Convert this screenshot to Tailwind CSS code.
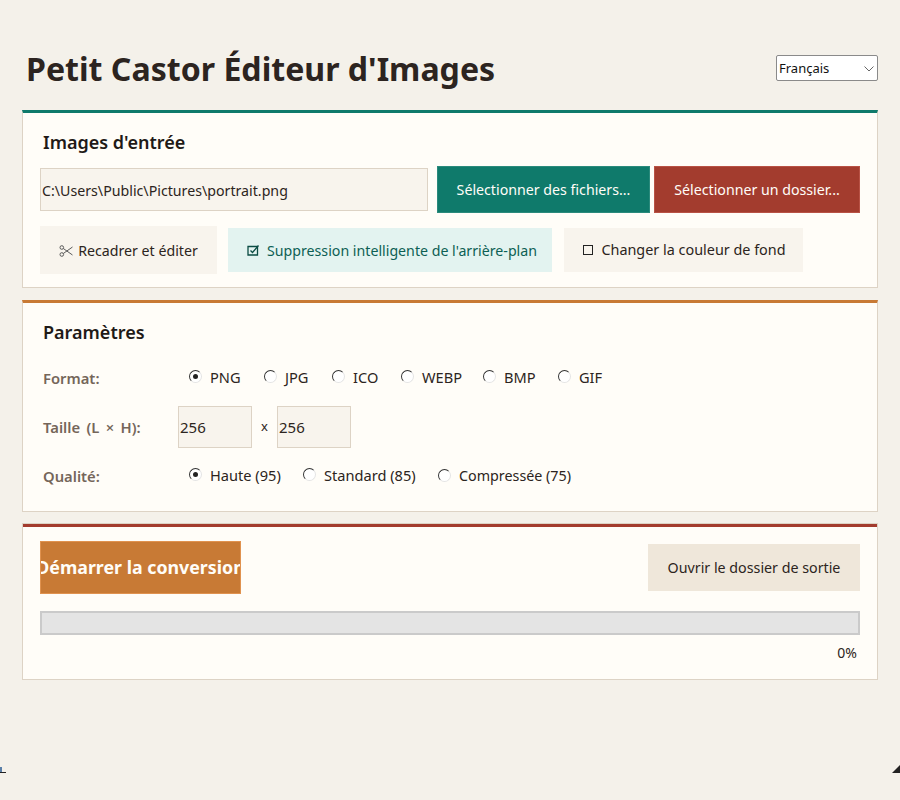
<!DOCTYPE html>
<html lang="fr">
<head>
<meta charset="utf-8">
<script src="https://cdn.jsdelivr.net/npm/@tailwindcss/browser@4"></script>
<title>Petit Castor Éditeur d'Images</title>
</head>
<body class="bg-[#f4f1ea] font-['Noto_Sans','Open_Sans',sans-serif] text-[#2c2420]">
<div class="relative h-[800px] w-[900px] overflow-hidden px-[22px] pt-[46px]">
  <header class="flex h-[64px] items-start justify-between">
    <h1 class="pl-[4px] text-[32.100px] leading-[46px] font-bold text-[#2c2420]">Petit Castor Éditeur d'Images</h1>
    <div class="relative mt-[9px] h-[26px] w-[102px]">
      <select class="block h-full w-full appearance-none rounded-[2px] border border-[#8a8a8a] bg-white pl-[2px] pt-[1px] text-[13px] text-[#111]"><option>Français</option></select>
      <svg class="absolute right-[3px] top-[10px]" width="12" height="8" viewBox="0 0 12 8" fill="none" stroke="#666"><path d="M1.500 1.500 6 6l4.500-4.500"/></svg>
    </div>
  </header>

  <section class="h-[178px] border border-t-[3px] border-[#ddd3c5] border-t-[#0f7a6b] bg-[#fffdf8] px-[17px]">
    <h2 class="pl-[3px] pt-[16px] text-[18px] leading-[27px] font-semibold text-[#1f1a17]">Images d'entrée</h2>
    <div class="mt-[10px] flex h-[47px] items-center">
      <input class="h-[43px] w-[388px] border border-[#ddd3c5] bg-[#f8f4ed] pl-[1px] pt-[1px] text-[14.200px] text-[#2c2420]" value="C:\Users\Public\Pictures\portrait.png">
      <button class="ml-[9px] h-[47px] w-[213px] border border-[#2a8a7c] bg-[#0f7a6b] text-[14.200px] text-[#fffdf8]">Sélectionner des fichiers...</button>
      <button class="ml-[4px] h-[47px] w-[206px] border border-[#b85245] bg-[#a33c2e] text-[14.200px] text-[#fffdf8]">Sélectionner un dossier...</button>
    </div>
    <div class="mt-[13px] flex h-[48px] items-center">
      <button class="flex h-[48px] w-[177px] items-center justify-center gap-[5px] bg-[#f8f4ed] pt-[2px] text-[14.200px]">
        <svg width="14" height="14" viewBox="0 0 14 14" fill="none" stroke="#5a5a5a" stroke-width="1"><circle cx="2.800" cy="3.500" r="1.800"/><circle cx="2.800" cy="10.500" r="1.800"/><path d="M4.300 4.500 13.500 11M4.300 9.500 13.500 3"/></svg>
        <span>Recadrer et éditer</span>
      </button>
      <button class="ml-[11px] flex h-[44px] w-[324px] items-center justify-center gap-[7px] bg-[#e3f3f0] pl-[4px] pt-[1px] text-[14.200px] text-[#0d5f54]">
        <svg width="13" height="13" viewBox="0 0 13 13" fill="none" stroke="#0b4c43" stroke-width="1.300"><path d="M1 2.500h9.500v8.500H1z"/><path d="m3.500 6.500 2 2 6-7"/></svg>
        <span>Suppression intelligente de l'arrière-plan</span>
      </button>
      <button class="ml-[12px] flex h-[44px] w-[239px] items-center justify-center gap-[8px] bg-[#f8f4ed] pb-[1px] pl-[2px] text-[14.400px]">
        <span class="h-[10px] w-[10px] border border-[#222]"></span>
        <span>Changer la couleur de fond</span>
      </button>
    </div>
  </section>

  <section class="mt-[12px] h-[212px] border border-t-[3px] border-[#ddd3c5] border-t-[#c87a35] bg-[#fffdf8] px-[20px]">
    <h2 class="pt-[16px] text-[18px] leading-[27px] font-semibold text-[#1f1a17]">Paramètres</h2>
    <div class="mt-[21px] flex h-[22px] items-center text-[14.600px]">
      <span class="w-[146px] text-[14.800px] font-semibold text-[#75665a]">Format:</span>
      <label class="flex w-[75px] items-center gap-[8px]"><span class="flex h-[13px] w-[13px] items-center justify-center rounded-full border border-[#e4e4e4] border-t-[#333] border-l-[#333] -translate-y-[1px] bg-white"><span class="h-[5px] w-[5px] rounded-full bg-[#222]"></span></span>PNG</label>
      <label class="flex w-[68px] items-center gap-[8px]"><span class="h-[13px] w-[13px] rounded-full border border-[#e4e4e4] border-t-[#333] border-l-[#333] -translate-y-[1px] bg-white"></span>JPG</label>
      <label class="flex w-[69px] items-center gap-[8px]"><span class="h-[13px] w-[13px] rounded-full border border-[#e4e4e4] border-t-[#333] border-l-[#333] -translate-y-[1px] bg-white"></span>ICO</label>
      <label class="flex w-[82px] items-center gap-[8px]"><span class="h-[13px] w-[13px] rounded-full border border-[#e4e4e4] border-t-[#333] border-l-[#333] -translate-y-[1px] bg-white"></span>WEBP</label>
      <label class="flex w-[75px] items-center gap-[8px]"><span class="h-[13px] w-[13px] rounded-full border border-[#e4e4e4] border-t-[#333] border-l-[#333] -translate-y-[1px] bg-white"></span>BMP</label>
      <label class="flex items-center gap-[8px]"><span class="h-[13px] w-[13px] rounded-full border border-[#e4e4e4] border-t-[#333] border-l-[#333] -translate-y-[1px] bg-white"></span>GIF</label>
    </div>
    <div class="mt-[17px] flex h-[42px] items-center text-[14px]">
      <span class="w-[135px] text-[14.800px] font-semibold [word-spacing:2.500px] text-[#75665a]">Taille (L × H):</span>
      <input class="h-[42px] w-[74px] border border-[#ddd3c5] bg-[#f8f4ed] pl-[1px] text-[15px] text-[#2c2420]" value="256">
      <span class="w-[25px] text-center text-[13px]">x</span>
      <input class="h-[42px] w-[74px] border border-[#ddd3c5] bg-[#f8f4ed] pl-[1px] text-[15px] text-[#2c2420]" value="256">
    </div>
    <div class="mt-[17px] flex h-[22px] items-center text-[14.600px]">
      <span class="w-[146px] text-[14.800px] font-semibold text-[#75665a]">Qualité:</span>
      <label class="flex w-[114px] items-center gap-[8px]"><span class="flex h-[13px] w-[13px] items-center justify-center rounded-full border border-[#e4e4e4] border-t-[#333] border-l-[#333] -translate-y-[1px] bg-white"><span class="h-[5px] w-[5px] rounded-full bg-[#222]"></span></span>Haute (95)</label>
      <label class="flex w-[135px] items-center gap-[8px]"><span class="h-[13px] w-[13px] rounded-full border border-[#e4e4e4] border-t-[#333] border-l-[#333] -translate-y-[1px] bg-white"></span>Standard (85)</label>
      <label class="flex items-center gap-[8px] text-[14.300px]"><span class="h-[13px] w-[13px] rounded-full border border-[#e4e4e4] border-t-[#333] border-l-[#333] -translate-y-[1px] bg-white"></span>Compressée (75)</label>
    </div>
  </section>

  <section class="mt-[11px] h-[157px] border border-[#ddd3c5] bg-[#fffdf8] px-[17px] shadow-[inset_0_3px_0_#a33c2e]">
    <div class="pt-[17px]">
      <div class="flex h-[53px] items-center justify-between">
        <button class="flex h-[53px] w-[201px] items-center justify-center overflow-hidden border border-[#e0924f] bg-[#c87a35] text-[17.800px] font-bold whitespace-nowrap text-[#fffdf8]">Démarrer la conversion</button>
        <button class="h-[47px] w-[212px] bg-[#efe7da] text-[14.250px]">Ouvrir le dossier de sortie</button>
      </div>
    </div>
    <div class="mt-[17px] h-[24px] border-2 border-[#cacaca] bg-[#e4e4e4]"></div>
    <p class="mt-[8px] pr-[3px] text-right text-[14px] leading-[20px]">0%</p>
  </section>

  <span class="absolute bottom-[27px] left-0 h-[1px] w-[6px] bg-[#222]"></span>
  <span class="absolute bottom-[28px] left-0 h-[5px] w-[2px] bg-[#5a7fa8]"></span>
  <span class="absolute bottom-[27px] right-0 h-[8px] w-[8px] bg-[#222] [clip-path:polygon(100%_0,100%_100%,0_100%)]"></span>
</div>
</body>
</html>
